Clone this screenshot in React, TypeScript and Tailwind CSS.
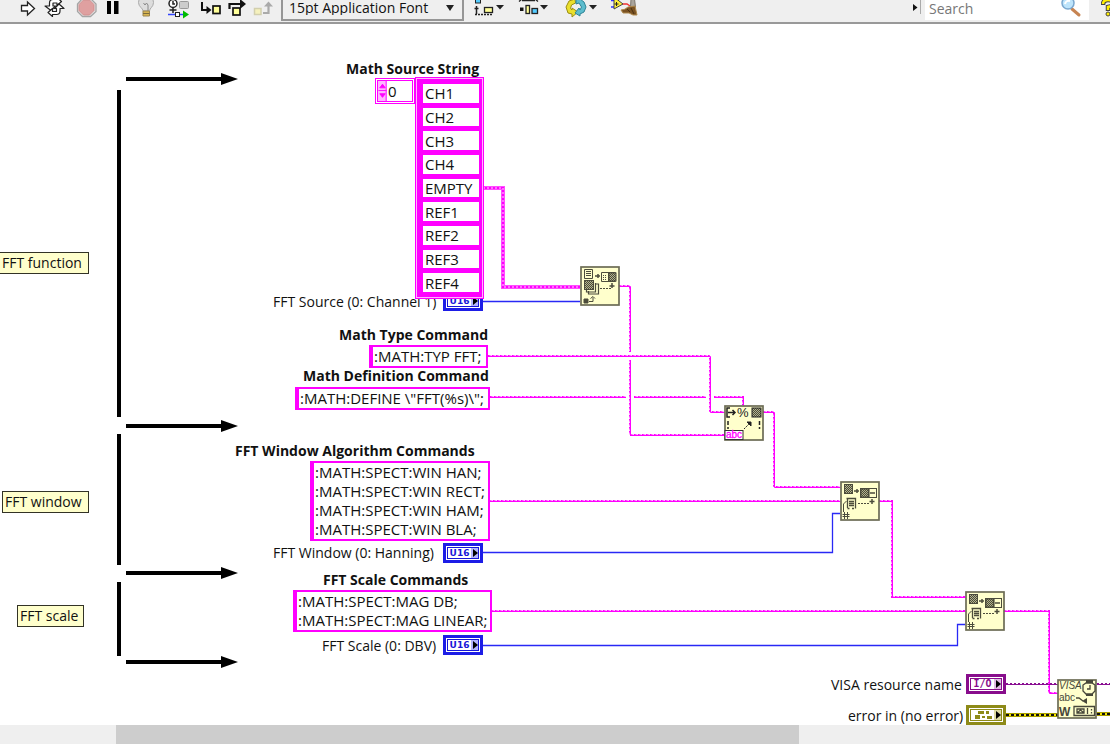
import React from "react";

type Wire = { d: string };

function ToolButton({ label, x, w, children }: { label: string; x: number; w: string; children: React.ReactNode }) {
  const widths: Record<string, number> = { "w-7": 28, "w-[30px]": 30, "w-9": 36, "w-[26px]": 26, "w-[31px]": 31, "w-[46px]": 46, "w-11": 44, "w-12": 48, "w-10": 40 };
  return (
    <button type="button" aria-label={label} className={`h-[22px] shrink-0 ${w}`}>
      <svg viewBox={`${x} 0 ${widths[w]} 22`} className="block h-[22px] w-full" aria-hidden="true">
        {children}
      </svg>
    </button>
  );
}

function Toolbar() {
  return (
    <header className="flex h-6 shrink-0 items-start overflow-hidden border-b-2 border-[#999] bg-[#efefef] pl-3">
      <ToolButton label="Run" x={12} w="w-7">
        <path d="M21.500 5.500h6v-3.500l7 6.500l-7 6.500v-4h-6z" fill="#fff" stroke="#222" strokeWidth="1.300" />
      </ToolButton>
      <ToolButton label="Run continuously" x={40} w="w-[30px]">
        <g fill="#fff" stroke="#222" strokeWidth="1.200" strokeLinejoin="round">
          <path d="M49.500 6V3q0-3.500 3.500-3.500h4v-2l4.500 4-4.500 4V3h-4v3h2.500l-4.500 4.500L45 6z" />
          <path d="M60 8.500V11q0 3.500-3.500 3.500h-4v2l-4.500-4 4.500-4v3h4V8.500h-2l4.500-4.500 5 4.500z" />
        </g>
      </ToolButton>
      <ToolButton label="Abort execution" x={70} w="w-[30px]">
        <path d="M82.500-1.500h8l5.500 5.500v7.500l-5.500 5h-8l-5-5V4z" fill="#e6e6e6" stroke="#a5a5a5" strokeWidth="1.300" />
        <path d="M83.500 0h6l4.500 4.500v6l-4.500 4.500h-6l-4.500-4.500v-6z" fill="#dfa0a0" stroke="#d08f8f" strokeLinejoin="round" />
      </ToolButton>
      <ToolButton label="Pause" x={100} w="w-[30px]">
        <path d="M107 1h4v13h-4zM114 1h4.500v13H114z" fill="#000" />
      </ToolButton>
      <ToolButton label="Highlight execution" x={130} w="w-[30px]">
        <path d="M143 11c0-3-4.500-4-4.500-8.500a7.500 7.500 0 0115 0c0 4.500-4 5.500-4 8.500z" fill="#ddd" stroke="#aaa" />
        <path d="M143.500 3l1.500 2 1.500-2 1.500 2v6" fill="none" stroke="#888" />
        <path d="M143 11h6.500v5h-6.500z" fill="#d9b650" stroke="#9a8450" />
        <path d="M143 13.500h6.500" stroke="#7b6a3c" />
      </ToolButton>
      <ToolButton label="Retain wire values" x={160} w="w-9">
        <circle cx="173" cy="3.500" r="4" fill="#fff" stroke="#222" strokeWidth="1.500" />
        <path d="M173 1v3h2M173 8v5M169.500 10h7" fill="none" stroke="#222" strokeWidth="1.500" />
        <rect x="179.500" y="1.500" width="9" height="7" rx="1" fill="#ccc" stroke="#999" />
        <path d="M168 14.500h16" stroke="#34f" strokeWidth="1.500" />
        <rect x="175.500" y="12.500" width="4" height="4" fill="#fff" stroke="#222" />
        <path d="M183 10.500l6 4-6 4z" fill="#0b0" />
      </ToolButton>
      <ToolButton label="Step into" x={196} w="w-7">
        <path d="M202 2v8h7" fill="none" stroke="#111" strokeWidth="2" />
        <path d="M206.500 6l5 4-5 4z" fill="#111" />
        <rect x="213" y="6" width="7" height="7.500" fill="#ff9" stroke="#111" strokeWidth="1.700" />
      </ToolButton>
      <ToolButton label="Step over" x={224} w="w-[26px]">
        <path d="M229.500 9V4h12" fill="none" stroke="#111" strokeWidth="2.200" />
        <path d="M240-1l6 5-6 5z" fill="#111" />
        <rect x="233" y="8" width="7" height="7" fill="#ff9" stroke="#111" strokeWidth="1.700" />
      </ToolButton>
      <ToolButton label="Step out" x={250} w="w-[31px]">
        <path d="M263 13h5.500V5" fill="none" stroke="#aaa" strokeWidth="2.200" />
        <path d="M264 6.500l4.500-5 4.500 5z" fill="#aaa" />
        <rect x="254.500" y="8.500" width="6.500" height="6" fill="#f5f1bd" stroke="#d2cfae" strokeWidth="1.500" />
      </ToolButton>
      <div className="relative w-[183px] shrink-0">
        <select aria-label="Text settings" className="block h-[21px] w-full appearance-none border-2 border-t-0 border-[#969696] bg-[#efefef] pb-1 pl-1.5 text-[14px] leading-4 text-[#111]">
          <option>15pt Application Font</option>
        </select>
        <svg viewBox="0 0 8 6" className="pointer-events-none absolute right-2.5 top-[5px] h-1.5 w-2" aria-hidden="true">
          <path d="M0 0h8L4 6z" fill="#222" />
        </svg>
      </div>
      <ToolButton label="Align objects" x={464} w="w-[46px]">
        <rect x="475.500" y="-4" width="5" height="7" fill="#5cf" stroke="#222" />
        <path d="M476.500 6v6M474.500 8.500h4M476.500 10v4" stroke="#222" strokeWidth="1.500" fill="none" />
        <path d="M475 14.500h18" stroke="#222" strokeDasharray="2 1" strokeWidth="1.300" />
        <rect x="484.500" y="7.500" width="8" height="5" fill="#ff9" stroke="#222" strokeWidth="1.300" />
        <path d="M496 5h8l-4 4.500z" fill="#222" />
      </ToolButton>
      <ToolButton label="Distribute objects" x={510} w="w-11">
        <path d="M519 1.500l3-2.500M535-1l3 2.500M522 .5h13" stroke="#222" strokeWidth="1.300" fill="none" />
        <rect x="520" y="7.500" width="3.500" height="3.500" fill="#111" />
        <rect x="526" y="5.500" width="3.500" height="8" fill="#ff9" stroke="#222" strokeWidth="1.300" />
        <rect x="532" y="8.500" width="5.500" height="5" fill="#5cf" stroke="#222" strokeWidth="1.300" />
        <path d="M540 5h8l-4 4.500z" fill="#222" />
      </ToolButton>
      <ToolButton label="Reorder" x={554} w="w-12">
        <path d="M575-1l-6 2-3 6 2 6 4 1v3l6-5-6-4v2l-1.500-1.500 1-3.500 4-2z" fill="#eadf2c" stroke="#9b8e12" />
        <path d="M576-1v5l3-1 2.500 4-1.500 3-1-2-4 5 5 3v-2l4-2 2-5-2-5-4-3z" fill="#5cbccd" stroke="#2d8497" />
        <path d="M589 5h8l-4 4.500z" fill="#222" />
      </ToolButton>
      <ToolButton label="Clean up diagram" x={602} w="w-10">
        <path d="M611 .5h3M611 7h3" stroke="#33f" strokeWidth="1.300" />
        <path d="M622 4h5l3 2" stroke="#e33" strokeWidth="1.500" fill="none" />
        <path d="M614-3l9 7-9 5z" fill="#ffef36" stroke="#444" />
        <path d="M616.500 2v4M614.500 4h4" stroke="#222" />
        <path d="M631-1h3.500l1 8h-5z" fill="#a9a49b" stroke="#7d766c" />
        <path d="M628 7l7-1 2 9h-4l-4-2-6 0-2-3q4 0 7-3z" fill="#7a5222" stroke="#b08a4e" />
        <path d="M627 9l3 3M631 8l3 6" stroke="#4b3010" />
      </ToolButton>
      <div className="ml-auto flex h-5 items-start">
        <svg viewBox="0 0 10 20" className="h-5 w-2.5" aria-hidden="true">
          <path d="M2 4l4.500 3.500L2 11z" fill="#111" />
          <path d="M9.500 0v14" stroke="#aaa" />
        </svg>
        <div className="relative ml-1">
          <input type="search" aria-label="Search" placeholder="Search" className="block h-5 w-[164px] bg-white pb-1 pl-1 text-[14px] leading-4 outline-none placeholder:text-[#777]" />
          <svg viewBox="0 0 24 20" className="absolute right-1.5 top-0 h-5 w-6" aria-hidden="true">
            <path d="M13 9l7 6" stroke="#c78452" strokeWidth="3" strokeLinecap="round" />
            <circle cx="9" cy="3" r="6" fill="#bde4fb" stroke="#7ba8cf" strokeWidth="1.500" />
            <path d="M6 4q1-4 5-3" fill="none" stroke="#fff" strokeWidth="2" />
          </svg>
        </div>
        <button type="button" aria-label="Help" className="ml-3 w-[9px] overflow-hidden">
          <svg viewBox="0 0 9 20" className="block h-5 w-[9px]" aria-hidden="true">
            <path d="M2 5q0-5 5-5t5 3q0 3-5 4v4" fill="none" stroke="#444" strokeWidth="4.500" />
            <path d="M2 4q0-4 5-4t5 3q0 3-5 4v3" fill="none" stroke="#fe0" strokeWidth="2.500" />
            <circle cx="7" cy="14" r="2" fill="#fe0" stroke="#444" />
          </svg>
        </button>
      </div>
    </header>
  );
}

/* A string wire: one solid pixel row with a dotted row beside it, haloed in white where it crosses another wire. */
function StringWire({ d }: Wire) {
  return (
    <g fill="none">
      <path d={d} stroke="#fff" strokeWidth="8" />
      <path d={d} stroke="#f0f" strokeWidth="2" strokeDasharray="2 2" />
      <path d={d} stroke="#ff8cff" strokeWidth="1" transform="translate(-0.5 -0.5)" strokeDasharray="2 2" strokeDashoffset="2" />
      <path d={d} stroke="#f0f" strokeWidth="1" transform="translate(0.5 0.5)" />
    </g>
  );
}

/* A string array wire: a three pixel chain with hollow links. */
function ArrayWire({ d }: Wire) {
  return (
    <g fill="none">
      <path d={d} stroke="#ff4dff" strokeWidth="4" />
      <path d={d} stroke="#f0f" strokeWidth="2" />
      <path d={d} stroke="#ffd9ff" strokeWidth="1" strokeDasharray="2 2" />
    </g>
  );
}

function Arrow({ y }: { y: number }) {
  return <path d={`M126 ${y - 2}h95v-4l17 6l-17 6v-4h-95z`} fill="#000" />;
}

function Wires() {
  return (
    <svg viewBox="0 24 1110 701" width="1110" height="701" className="absolute left-0 top-0" aria-hidden="true">
      <path d="M119 90v327M119 434v131M119 582v74" stroke="#000" strokeWidth="4" />
      <Arrow y={79} />
      <Arrow y={426} />
      <Arrow y={573} />
      <Arrow y={662} />
      <ArrayWire d="M483 188H503V287H580" />
      <StringWire d="M490 397H743V405" />
      <StringWire d="M619 286H630V435H724" />
      <StringWire d="M488 356H710V412H724" />
      <StringWire d="M763 412H774V487H840" />
      <StringWire d="M489 501H840" />
      <StringWire d="M879 501H892V597H965" />
      <StringWire d="M491 611H965" />
      <StringWire d="M1004 611H1049V693H1058" />
      <g fill="none" stroke="#2929f5" strokeWidth="1.300">
        <path d="M483 301.500H580" />
        <path d="M483 552.500H832.500V513.500H840" />
        <path d="M483 645.500H957.500V624.500H965" />
      </g>
      <g fill="none">
        <path d="M1006 684H1058M1097 684H1110" stroke="#8a1092" strokeWidth="2" strokeDasharray="2 2" />
        <path d="M1006 684.500H1058M1097 684.500H1110" stroke="#8a1092" strokeWidth="1" />
        <path d="M1006 715H1058M1097 714H1110" stroke="#a59c00" strokeWidth="4" />
        <path d="M1006 715H1058M1097 714H1110" stroke="#f2e400" strokeWidth="2" />
        <path d="M1006 715H1058M1097 714H1110" stroke="#111" strokeWidth="2" strokeDasharray="3 2" />
      </g>
    </svg>
  );
}

function NodeSvg({ place, label, h = 40, children }: { place: string; label: string; h?: number; children: React.ReactNode }) {
  return (
    <svg viewBox={`0 0 40 ${h}`} width="40" height={h} role="img" aria-label={label} className={`absolute font-['Liberation_Sans',sans-serif] ${place}`}>
      <defs>
        <pattern id="checker" width="2" height="2" patternUnits="userSpaceOnUse">
          <rect width="2" height="2" fill="#b4b48f" />
          <path d="M0 0h1v1H0zM1 1h1v1H1z" fill="#4b4b3a" />
        </pattern>
      </defs>
      <rect x="1" y="1" width="38" height={h - 2} fill="#ffffcc" stroke="#6c6c55" strokeWidth="1.700" />
      {children}
    </svg>
  );
}

function ReplaceIcon() {
  return (
    <g fill="none" stroke="#4c4c3c">
      <rect x="4.500" y="3.500" width="8" height="9" fill="url(#checker)" />
      <path d="M14 10h5M17 8v4" strokeWidth="1.500" />
      <rect x="20.500" y="7.500" width="16" height="9" />
      <rect x="21" y="8" width="8" height="8" fill="url(#checker)" />
      <path d="M28.500 8v8M30 12h5" strokeWidth="1.300" />
      <path d="M6.500 17.500h9v10M7.500 18v9M9 20.500h5M9 22.500h5M9 24.500h5M7.500 27.500h2M12 27.500h2" strokeWidth="1.300" />
      <path d="M3.500 31v-8l3-3" />
      <path d="M18 22.500h12" strokeDasharray="2 1" />
      <path d="M32 18v5M29.500 20.500h5" strokeWidth="1.500" />
      <path d="M4.500 31v7M7.500 31v7M2.500 33.500h7M2.500 35.500h7" />
    </g>
  );
}

function Nodes() {
  return (
    <>
      <NodeSvg label="Index Array" place="left-[580px] top-[242px]">
        <g fill="none" stroke="#4c4c3c">
          <path d="M4.500 3.500h8v9h-8zM6 5.500h5M6 7.500h5M6 9.500h5" />
          <path d="M15 10h5M18 8v4" strokeWidth="1.500" />
          <path d="M21.500 6.500h14v9h-14zM28.500 7v8" />
          <rect x="29" y="7" width="7" height="8" fill="url(#checker)" />
          <path d="M23 9.500h4M23 11.500h4M23 13.500h4" strokeDasharray="1 1" />
          <path d="M8.500 25v3h10V18h-3M6.500 23v3h9v-9" strokeWidth="1.200" />
          <rect x="4.500" y="14.500" width="9" height="9" fill="url(#checker)" />
          <path d="M20 22.500h11" strokeDasharray="2 1" />
          <path d="M32 17v5M29.500 20h5" strokeWidth="1.500" />
          <path d="M4 33h4v4H4z" fill="#4c4c3c" />
          <path d="M9 35.500h4v-4M10.500 32.500l2.500-2 2 2" />
        </g>
      </NodeSvg>
      <NodeSvg label="Format Into String" place="left-[724px] top-[381px]" h={36}>
        <g fill="none" stroke="#222">
          <path d="M6 3H3v9h3M4 7.500h7M8.500 5l2.500 2.500-2.500 2.500" strokeWidth="1.500" />
          <path d="M4 16v4M4 22v2M35.500 16v4M35.500 22v2" strokeWidth="1.500" />
          <rect x="28" y="3" width="9" height="9" fill="url(#checker)" />
          <path d="M20 24l5-5" strokeDasharray="2 1" />
          <path d="M23 17h4v4z" fill="#222" />
        </g>
        <text x="13" y="12" fontSize="13" fontWeight="500" fill="#222">%</text>
        <rect x="1" y="25.500" width="18" height="9" fill="#fff" stroke="#333" />
        <text x="2" y="33" fontSize="10" fill="#f0f" stroke="#f0f" strokeWidth="0.300">abc</text>
      </NodeSvg>
      <NodeSvg label="Pick Line" place="left-[840px] top-[457px]"><ReplaceIcon /></NodeSvg>
      <NodeSvg label="Pick Line" place="left-[965px] top-[567px]"><ReplaceIcon /></NodeSvg>
      <NodeSvg label="VISA Write" place="left-[1057px] top-[655px]">
        <g fill="#47473a">
          <text x="2" y="10" fontSize="10" fontStyle="italic">VISA</text>
          <text x="2" y="22" fontSize="10">abc</text>
          <text x="2" y="37" fontSize="12" fontWeight="800">W</text>
          <path d="M25 22l5-3v6z" />
          <path d="M29 1h7v3h-7zM29 14h7v3h-7z" />
        </g>
        <g fill="none" stroke="#47473a" strokeWidth="1.300">
          <path d="M29 4h6l3 2v6l-3 3h-6l-3-3V6zM33 6v4h-3" fill="#ffffcc" />
          <path d="M19 19h3l4 3" />
          <path d="M17 27.500h20.500v9H17zM20 30h7v4h-7zM20 34l3.500-3 3.500 3M30.500 29v6M34.500 30v1.500M34.500 33v1.500" />
        </g>
      </NodeSvg>
    </>
  );
}

function Terminal({ place, kind }: { place: string; kind: "U16" | "I/O" | "error" }) {
  const tone = {
    U16: "border-[#1d1de6] text-[#1616d8] font-['DejaVu_Sans'] text-[9px]",
    "I/O": "border-[#880d8c] text-[#880d8c] font-['DejaVu_Sans_Mono'] text-[10px]",
    error: "border-[#8d8a18] text-[#8d8a18] text-[10px]",
  }[kind];
  const tint = { U16: "bg-[#b4b4ff]", "I/O": "bg-[#dfb9e3]", error: "bg-[#dcdaa0]" }[kind];
  return (
    <div className={`absolute flex h-5 w-10 border-[3px] bg-white p-px ${tone} ${place}`}>
      <div className="flex flex-1 items-stretch border border-current">
        <span className="flex flex-1 items-center justify-center font-bold leading-none">
          {kind === "error" ? (
            <svg viewBox="0 0 20 10" className="h-2.5 w-5" aria-label="Error cluster" role="img">
              <path d="M2 5h5v4H2zM5 1h6v3H5zM13 1h3v3h-3zM14 6h5v3h-5zM9 6h3v2H9z" fill="currentColor" />
            </svg>
          ) : kind}
        </span>
        <span className={`flex w-[7px] items-center justify-end ${tint}`}>
          <svg viewBox="0 0 5 8" className="h-2 w-[5px]" aria-hidden="true"><path d="M0 0l5 4-5 4z" fill="#000" /></svg>
        </span>
      </div>
    </div>
  );
}

function Caption({ place, children }: { place: string; children: React.ReactNode }) {
  return <h2 className={`absolute whitespace-nowrap text-[14px] font-bold leading-5 ${place}`}>{children}</h2>;
}

function Label({ place, children }: { place: string; children: React.ReactNode }) {
  return <p className={`absolute whitespace-nowrap text-[14px] leading-5 ${place}`}>{children}</p>;
}

function StringConstant({ place, lines }: { place: string; lines: string[] }) {
  return (
    <div className={`absolute whitespace-nowrap border-2 border-l-4 border-[#f0f] bg-white pl-px text-[15px] leading-[19px] ${place}`}>
      {lines.map((line) => <div key={line}>{line}</div>)}
    </div>
  );
}

function Note({ place, children }: { place: string; children: React.ReactNode }) {
  return <div className={`absolute whitespace-nowrap border border-[#333326] bg-[#ffffcc] pl-0.5 text-[14px] leading-5 ${place}`}>{children}</div>;
}

const sources = ["CH1", "CH2", "CH3", "CH4", "EMPTY", "REF1", "REF2", "REF3", "REF4"];

function Diagram() {
  return (
    <main className="relative min-h-[701px] flex-1 overflow-hidden bg-white">
      <Wires />
      <Note place="-left-px top-[228px] w-[90px]">FFT function</Note>
      <Note place="left-0.5 top-[467px] w-[87px]">FFT window</Note>
      <Note place="left-[17px] top-[581px] w-[67px]">FFT scale</Note>

      <Label place="left-[273px] top-[268px]">FFT Source (0: Channel 1)</Label>
      <Terminal kind="U16" place="left-[443px] top-[267px]" />
      <Caption place="left-[346px] top-[35px]">Math Source String</Caption>
      <div className="absolute left-[375px] top-[54px] flex h-[26px] w-10 border border-[#f0f] bg-white p-px">
        <div className="flex flex-1 border border-[#f0f]">
          <svg viewBox="0 0 9 22" className="h-full w-[9px] shrink-0 bg-[#ffb5ff]" aria-hidden="true">
            <path d="M1.500 7.500l3-4 3 4zM1.500 14l3 4 3-4zM0 10.500h9M8.500 0v22" fill="#f0f" stroke="#f0f" />
          </svg>
          <input aria-label="Array index" defaultValue="0" className="w-full min-w-0 pl-px text-[15px] leading-5 outline-none" />
        </div>
      </div>
      <div className="absolute left-[415px] top-[53px] h-[222px] w-[69px] border border-[#f0f] bg-[#ffb5ff] p-px">
        <ul className="grid h-full grid-rows-9 gap-[5px] bg-[#f0f] py-[5px] pl-1.5 pr-[3px]">
          {sources.map((s) => (
            <li key={s} className="flex min-h-0 items-center bg-white pl-0.5 text-[15px] leading-[18px]">{s}</li>
          ))}
        </ul>
      </div>

      <Caption place="left-[339px] top-[301px]">Math Type Command</Caption>
      <StringConstant place="left-[369px] top-[321px] w-[119px]" lines={[":MATH:TYP FFT;"]} />
      <Caption place="left-[303px] top-[342px]">Math Definition Command</Caption>
      <StringConstant place="left-[295px] top-[363px] w-[195px]" lines={[':MATH:DEFINE \\"FFT(%s)\\";']} />

      <Caption place="left-[235px] top-[417px]">FFT Window Algorithm Commands</Caption>
      <StringConstant place="left-[310px] top-[437px] w-[180px]" lines={[":MATH:SPECT:WIN HAN;", ":MATH:SPECT:WIN RECT;", ":MATH:SPECT:WIN HAM;", ":MATH:SPECT:WIN BLA;"]} />
      <Label place="left-[273px] top-[519px]">FFT Window (0: Hanning)</Label>
      <Terminal kind="U16" place="left-[443px] top-[519px]" />

      <Caption place="left-[323px] top-[546px]">FFT Scale Commands</Caption>
      <StringConstant place="left-[293px] top-[566px] w-[199px]" lines={[":MATH:SPECT:MAG DB;", ":MATH:SPECT:MAG LINEAR;"]} />
      <Label place="left-[322px] top-[612px]">FFT Scale (0: DBV)</Label>
      <Terminal kind="U16" place="left-[443px] top-[611px]" />

      <Label place="left-[831px] top-[651px]">VISA resource name</Label>
      <Terminal kind="I/O" place="left-[966px] top-[650px]" />
      <Label place="left-[848px] top-[682px]">error in (no error)</Label>
      <Terminal kind="error" place="left-[966px] top-[681px]" />
      <Nodes />
    </main>
  );
}

export default function App() {
  return (
    <div className="flex min-h-screen flex-col bg-white font-['Open_Sans','Noto_Sans',sans-serif] text-[#111]">
      <Toolbar />
      <Diagram />
      <footer className="flex h-[19px] shrink-0 bg-[#efefef] pl-[116px]" aria-label="Horizontal scroll">
        <div className="w-11/16 bg-[#cdcdcd]" />
      </footer>
    </div>
  );
}
